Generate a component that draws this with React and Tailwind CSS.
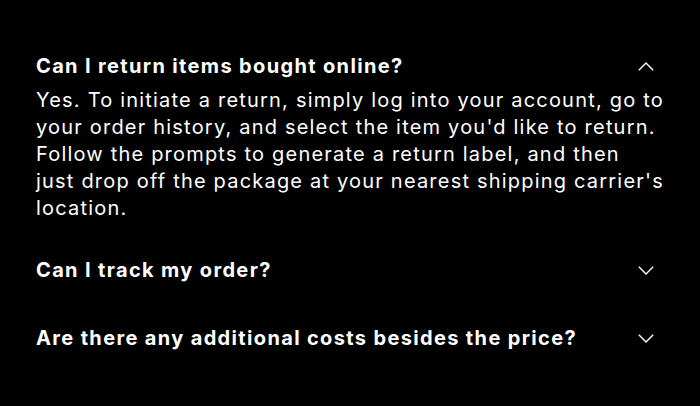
import React, { useState } from "react";

const FAQS = [
  {
    q: "Can I return items bought online?",
    a: "Yes. To initiate a return, simply log into your account, go to your order history, and select the item you'd like to return. Follow the prompts to generate a return label, and then\njust drop off the package at your nearest shipping carrier's location.",
  },
  {
    q: "Can I track my order?",
    a: "Yes. Once your order ships, you'll receive an email with a tracking number and a link to follow your package.",
  },
  {
    q: "Are there any additional costs besides the price?",
    a: "Shipping and taxes are calculated at checkout based on your location.",
  },
];

const Chevron = ({ up }) => (
  <svg width="16" height="9" viewBox="0 0 16 9" fill="none" className="mr-[14px] shrink-0">
    <path
      d={up ? "M0.8 8.2 L8 1 L15.2 8.2" : "M0.8 0.8 L8 8 L15.2 0.8"}
      stroke="white"
      strokeWidth="1.4"
    />
  </svg>
);

const App = () => {
  const [open, setOpen] = useState(0);

  return (
    <div
      className="bg-black min-h-screen w-full pl-9 pr-8 pt-8 text-white"
      style={{ fontFamily: "Inter, 'Noto Sans', sans-serif" }}
    >
      {FAQS.map((item, i) => (
        <div key={i} className={i === 0 ? "pt-5 pb-[14px]" : "py-5"}>
          <button
            className="w-full flex items-center justify-between h-7 text-left"
            onClick={() => setOpen(open === i ? -1 : i)}
          >
            <span className="text-[20px] font-bold tracking-[1.35px] leading-7">{item.q}</span>
            <Chevron up={open === i} />
          </button>
          {open === i && (
            <p className="mt-[7px] text-[20px] tracking-[1.2px] leading-[27px] font-normal whitespace-pre-line">
              {item.a}
            </p>
          )}
        </div>
      ))}
    </div>
  );
};

export default App;
